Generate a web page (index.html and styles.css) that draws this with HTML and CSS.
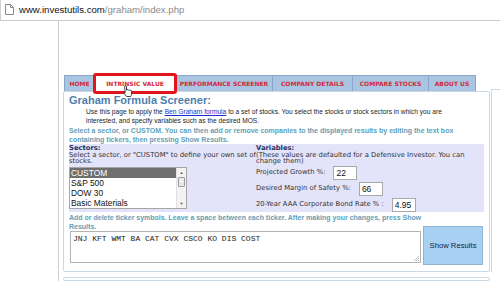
FILE: index.html
```html
<!DOCTYPE html>
<html>
<head>
<meta charset="utf-8">
<link rel="stylesheet" href="styles.css">
</head>
<body>
<div class="omnibox">
  <svg class="pageicon" width="9" height="11" viewBox="0 0 9 11"><path d="M0.5 0.5 H5.5 L8.5 3.5 V10.5 H0.5 Z M5.5 0.5 V3.5 H8.5" fill="#fff" stroke="#8a8a8a" stroke-width="1"/></svg>
  <span class="host">www.investutils.com</span><span class="path">/graham/index.php</span>
</div>
<div class="page">
  <div class="gutter"></div>
  <div class="main">
    <nav class="tabs">
      <div class="tab t1">HOME</div>
      <div class="tab t2 active">INTRINSIC VALUE
        <svg class="hand" width="12" height="12" viewBox="0 0 12 12"><path d="M3.5 0.8 C4.3 0.8 4.5 1.3 4.5 2 V5.2 C4.7 4.6 6.2 4.6 6.3 5.3 C6.6 4.8 7.9 4.9 8 5.6 C8.3 5.2 9.6 5.3 9.6 6.2 V8.8 C9.6 10 8.9 11.2 8.6 11.5 H4.6 C4.2 10.8 2.8 9.4 2 8.3 C1.5 7.6 2.1 6.9 2.8 7.4 L3.2 7.8 C3.2 7.8 2.6 2 2.6 1.8 C2.6 1.2 3 0.8 3.5 0.8 Z" fill="#fff" stroke="#111" stroke-width="0.8"/></svg>
      </div>
      <div class="tab t3">PERFORMANCE SCREENER</div>
      <div class="tab t4">COMPANY DETAILS</div>
      <div class="tab t5">COMPARE STOCKS</div>
      <div class="tab t6">ABOUT US</div>
    </nav>
    <div class="row">
      <section class="panel">
        <h1 class="title">Graham Formula Screener:</h1>
        <p class="desc">Use this page to apply the <a class="link">Ben Graham formula</a> to a set of stocks. You select the stocks or stock sectors in which you are<br>interested, and specify variables such as the desired MOS.</p>
        <p class="note">Select a sector, or CUSTOM. You can then add or remove companies to the displayed results by editing the text box<br>containing tickers, then pressing Show Results.</p>
        <div class="options">
          <div class="sectors">
            <div class="head">Sectors:</div>
            <div class="txt">Select a sector, or "CUSTOM" to define your own set of<br>stocks.</div>
            <div class="list">
              <div class="items">
                <div class="item sel">CUSTOM</div>
                <div class="item">S&amp;P 500</div>
                <div class="item">DOW 30</div>
                <div class="item">Basic Materials</div>
              </div>
              <div class="scroll">
                <span class="arrow">&#9650;</span>
                <span class="thumb"></span>
                <span class="spacer"></span>
                <span class="arrow">&#9660;</span>
              </div>
            </div>
          </div>
          <div class="vars">
            <div class="head">Variables:</div>
            <div class="txt">(These values are defaulted for a Defensive Investor. You can<br>change them)</div>
            <div class="vrow"><span class="lbl">Projected Growth %:</span><span class="inp i1">22</span></div>
            <div class="vrow"><span class="lbl">Desired Margin of Safety %:</span><span class="inp i2">66</span></div>
            <div class="vrow"><span class="lbl">20-Year AAA Corporate Bond Rate % :</span><span class="inp i3">4.95</span></div>
          </div>
        </div>
        <div class="tickers">
          <div class="tcol">
            <p class="note">Add or delete ticker symbols. Leave a space between each ticker. After making your changes, press Show<br>Results.</p>
            <div class="textarea">JNJ KFT WMT BA CAT CVX CSCO KO DIS COST
              <svg class="grip" width="5" height="5" viewBox="0 0 5 5"><path d="M0 5 L5 0 M2 5 L5 2 M4 5 L5 4" stroke="#999" stroke-width="0.6"/></svg>
            </div>
          </div>
          <div class="btn">Show Results</div>
        </div>
      </section>
      <div class="side"></div>
    </div>
    <div class="panel2"></div>
  </div>
</div>
</body>
</html>
```

FILE: styles.css
```css
* { box-sizing: border-box; margin: 0; padding: 0; }
html, body { width: 500px; height: 281px; overflow: hidden; background: #fff; }
body { font-family: "Liberation Sans", Arial, sans-serif; color: #222; }

.omnibox {
  height: 21px;
  display: flex;
  align-items: center;
  padding-left: 4px;
  border-bottom: 1px solid #c9c9c9;
  border-left: 1px solid #d0d0d0;
  font-size: 9.6px;
  padding-bottom: 1px;
}
.pageicon { margin-right: 5px; }
.host { color: #111; }
.path { color: #8a8a8a; }

.page { display: flex; height: 260px; }
.gutter { width: 59px; flex: none; border-right: 1px solid #cfcfcf; }
.main { flex: 1; padding-left: 4px; padding-top: 54px; display: flex; flex-direction: column; }

.tabs { display: flex; margin-left: 1px; height: 16px; }
.tab {
  position: relative;
  height: 16px;
  border: 1px solid #88a7cb;
  border-bottom: none;
  margin-right: -1px;
  background: #a9c5e2;
  color: #d3283a;
  font-family: "DejaVu Sans", Verdana, sans-serif;
  font-weight: bold;
  font-size: 6px;
  display: flex;
  align-items: center;
  justify-content: center;
}
.t1 { width: 31px; }
.t2 { width: 82px; }
.t3 { width: 98px; }
.t4 { width: 81px; }
.t5 { width: 77px; }
.t6 { width: 48px; }
.tab.active { background: #fff; z-index: 2; }
.tab.active::before {
  content: "";
  position: absolute;
  left: -2px; right: -2px; top: -3px; bottom: -3px;
  border: 3px solid #e3141b;
  border-radius: 3px;
}
.hand { position: absolute; left: 27px; top: 9px; z-index: 3; }

.row { display: flex; }
.panel {
  width: 427px;
  height: 181px;
  flex: none;
  border: 1px solid #c8d8e7;
  border-radius: 2px;
  padding: 2px 5px 0 5px;
}
.side {
  flex: 1;
  margin-left: 1px;
  margin-top: -2px;
  border-left: 1px solid #c8d8e7;
  border-top: 1px solid #c8d8e7;
}
.panel2 {
  width: 427px;
  height: 20px;
  margin-top: 5px;
  border: 1px solid #c8d8e7;
  border-radius: 2px;
}

.title {
  font-size: 11px;
  line-height: 13px;
  font-weight: bold;
  color: #4f7fae;
}
.desc {
  padding-left: 17px;
  font-size: 6.65px;
  line-height: 9px;
  color: #1c1c1c;
  white-space: nowrap;
}
.link { color: #1a2fd0; text-decoration: underline; }
.note {
  margin-top: 1px;
  font-size: 7px;
  line-height: 9px;
  font-weight: bold;
  color: #5f9fb8;
  white-space: nowrap;
}

.options {
  display: flex;
  height: 68px;
  background: #e3e3fa;
  padding-top: 1px;
  font-family: "DejaVu Sans", Verdana, sans-serif;
  font-size: 6.8px;
  line-height: 6.6px;
  color: #333;
}
.head { font-weight: bold; color: #1f2e5e; }
.sectors { width: 187px; flex: none; }
.txt { white-space: nowrap; }
.vars { flex: 1; }

.list {
  display: flex;
  margin-top: 2px;
  width: 118px;
  height: 42px;
  border: 1px solid #a6a6a6;
  background: #fff;
  font-family: "Liberation Sans", Arial, sans-serif;
  font-size: 8.4px;
  line-height: 10px;
  color: #111;
}
.items { flex: 1; }
.item { padding-left: 1px; height: 10px; }
.item.sel { background: #6f6f6f; color: #fff; }
.scroll {
  width: 10px;
  display: flex;
  flex-direction: column;
  align-items: center;
  background: #f2f2f2;
  border-left: 1px solid #e0e0e0;
}
.arrow { font-size: 4px; line-height: 9px; color: #555; }
.thumb {
  width: 7px;
  height: 10px;
  border: 1px solid #9c9c9c;
  background: linear-gradient(#fff, #fff) center/3px 1px no-repeat, #e8e8e8;
  border-radius: 1px;
}
.spacer { flex: 1; }

.vrow { display: flex; align-items: center; height: 16px; }
.lbl { white-space: nowrap; }
.inp {
  margin-left: 8px;
  width: 24px;
  height: 14px;
  border: 1px solid #a8a8a8;
  background: #fff;
  font-family: "Liberation Sans", Arial, sans-serif;
  font-size: 8.5px;
  line-height: 12px;
  padding-left: 2px;
  color: #111;
}

.tickers { display: flex; align-items: flex-end; }
.tcol { width: 354px; flex: none; }
.textarea {
  position: relative;
  margin-left: 1px;
  margin-bottom: 2px;
  width: 351px;
  height: 32px;
  border: 1px solid #b3b3b3;
  padding: 2px 2px;
  font-family: "Liberation Mono", "Courier New", monospace;
  font-size: 8px;
  line-height: 9px;
  color: #222;
}
.grip { position: absolute; right: 1px; bottom: 1px; }
.btn {
  width: 60px;
  height: 39px;
  background: #a8d0f3;
  border: 1px solid #8fb5d6;
  display: flex;
  align-items: center;
  justify-content: center;
  font-size: 7.7px;
  color: #223;
}
```
